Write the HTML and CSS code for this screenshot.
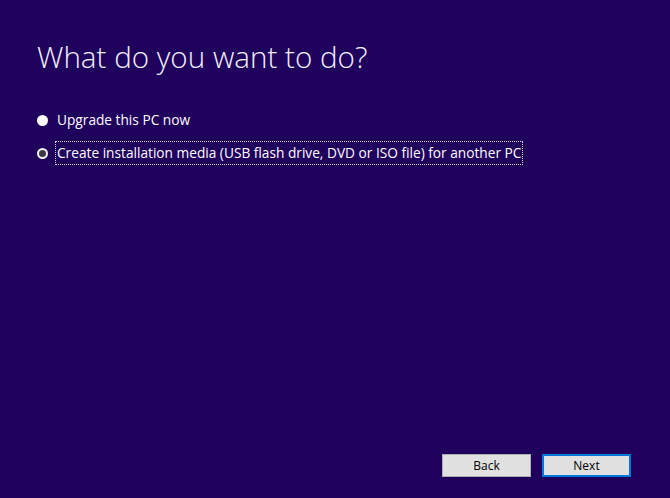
FILE: index.html
```html
<!DOCTYPE html>
<html lang="en">
<head>
<meta charset="utf-8">
<title>What do you want to do?</title>
<link rel="stylesheet" href="styles.css">
</head>
<body>
<div class="window">
  <main class="content">
    <h1 class="title">What do you want to do?</h1>
    <div class="options">
      <label class="option">
        <span class="radio checked"></span>
        <span class="label">Upgrade this PC now</span>
      </label>
      <label class="option">
        <span class="radio"></span>
        <span class="label focused">Create installation media (USB flash drive, DVD or ISO file) for another PC</span>
      </label>
    </div>
  </main>
  <footer class="footer">
    <button class="btn">Back</button>
    <button class="btn primary">Next</button>
  </footer>
</div>
</body>
</html>
```

FILE: styles.css
```css
html, body {
  margin: 0;
  padding: 0;
  background: #1f005d;
}
.window {
  width: 670px;
  height: 498px;
  display: flex;
  flex-direction: column;
  background: #1f005d;
  color: #ffffff;
  font-family: "Open Sans", "Noto Sans", "Liberation Sans", sans-serif;
  box-sizing: border-box;
}
.content {
  flex: 1;
  padding: 37px 0 0 37px;
}
.title {
  margin: 0;
  font-size: 29.6px;
  font-weight: 300;
  line-height: 40px;
  color: #f2f0f8;
  letter-spacing: 0;
}
.options {
  margin-top: 31px;
  display: flex;
  flex-direction: column;
  gap: 9px;
}
.option {
  display: flex;
  align-items: center;
  gap: 7px;
  font-size: 13.7px;
  line-height: 22px;
}
.radio {
  width: 11px;
  height: 11px;
  border-radius: 50%;
  background: #ffffff;
  box-sizing: border-box;
}
.radio:not(.checked) {
  border: 2.5px solid #f4f4f4;
  background: #3c3848;
}
.label {
  padding: 0 1px;
  border: 1px dotted transparent;
}
.label.focused {
  border-color: #d8d4e4;
}
.footer {
  display: flex;
  justify-content: flex-end;
  gap: 11px;
  padding: 0 39px 21px 0;
}
.btn {
  width: 89px;
  height: 23px;
  box-sizing: border-box;
  background: #e1e1e1;
  border: 1px solid #adadad;
  font-family: "Open Sans", "Noto Sans", "Liberation Sans", sans-serif;
  font-size: 12px;
  color: #000;
  padding: 0;
}
.btn.primary {
  border: 2px solid #0078d7;
}
```
